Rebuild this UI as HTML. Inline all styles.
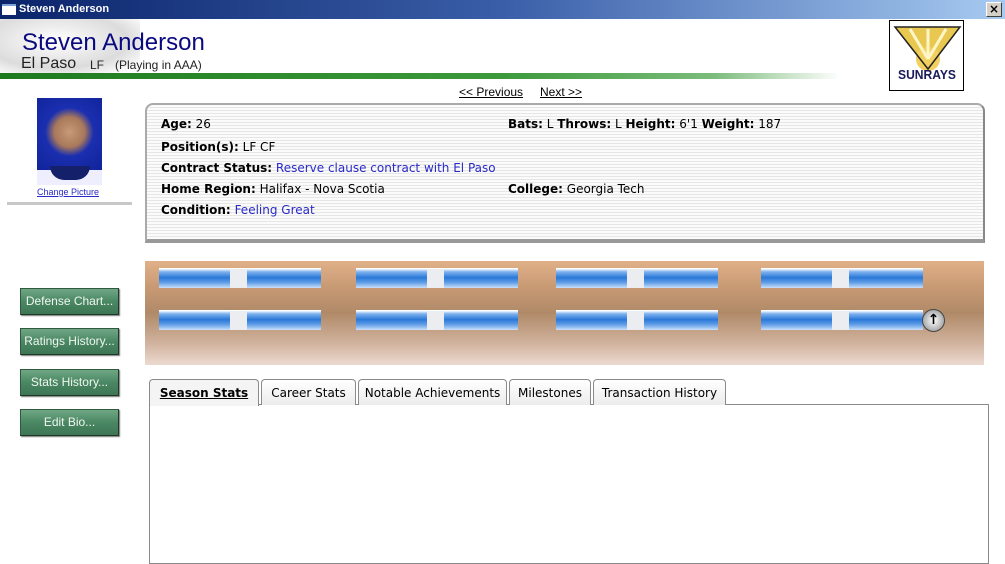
<!DOCTYPE html>
<html><head><style>
*{margin:0;padding:0;box-sizing:border-box}
body{width:1005px;height:556px;overflow:hidden;background:#fff;font-family:"DejaVu Sans",sans-serif;position:relative}
.abs{position:absolute}
.t{position:absolute;font-size:12px;color:#000;white-space:nowrap}
.b{font-weight:bold}
.lnk{color:#2a2ac8}
.btn{position:absolute;left:20px;width:99px;height:27px;background:linear-gradient(#6fa784,#4a8763 50%,#3e7655);border:1px solid #2f5a40;border-right-color:#1d3a28;border-bottom-color:#1d3a28;color:#f0f6f0;font-family:"Liberation Sans",sans-serif;font-size:12px;text-align:center;line-height:25px;box-shadow:1px 1px 1px #777}
.bar{position:absolute;width:162px;height:20px;background:linear-gradient(#f4f8ff 0,#7fb2ee 15%,#2a78d8 45%,#5e9ce6 70%,#c9e0fa 100%);border-top:1px solid #fff}
.bar i{position:absolute;left:71px;top:0;width:17px;height:19px;background:#ecedf0}
.tab{position:absolute;top:379px;height:26px;border:1px solid #8a8a8a;border-bottom:none;border-radius:4px 4px 0 0;background:linear-gradient(#fff,#ececec);font-size:12px;text-align:center;line-height:26px}
</style></head><body>
<div class="abs" style="left:0;top:0;width:1005px;height:19px;background:linear-gradient(90deg,#0a246a,#3a5ea8 50%,#a6caf0)"></div>
<div class="abs" style="left:2px;top:4px;width:14px;height:11px;background:#fff;border-top:2px solid #7aa0d8"></div>
<div class="t b" style="left:19px;top:3px;font-size:11px;color:#fff;font-family:'Liberation Sans',sans-serif">Steven Anderson</div>
<div class="abs" style="left:986px;top:2px;width:16px;height:15px;background:#d4d0c8;border:1px solid #fff;border-right-color:#404040;border-bottom-color:#404040;font-size:12px;line-height:12px;text-align:center;font-weight:bold">×</div>
<div class="abs" style="left:0;top:19px;width:140px;height:54px;background:radial-gradient(ellipse at 40% 40%,#fff,#dcdcdc 60%,#fff 90%)"></div>
<div class="t" style="left:22px;top:29px;font-size:24px;color:#0a0a80;font-family:'Liberation Sans',sans-serif">Steven Anderson</div>
<div class="t" style="left:21px;top:55px;font-size:16px;color:#222;font-family:'Liberation Sans',sans-serif">El Paso</div>
<div class="t" style="left:90px;top:58px;font-size:12px;color:#222;font-family:'Liberation Sans',sans-serif">LF</div>
<div class="t" style="left:115px;top:58px;font-size:12px;color:#222;font-family:'Liberation Sans',sans-serif">(Playing in AAA)</div>
<div class="abs" style="left:0;top:73px;width:840px;height:6px;background:linear-gradient(90deg,#1e7a1e,#3c9a3c 60%,#7cbc7c 85%,#fff)"></div>
<div class="abs" style="left:889px;top:20px;width:75px;height:71px;border:1px solid #000;background:#fff;overflow:hidden">
<svg width="75" height="71"><polygon points="5,6 70,6 38,48" fill="#e8c850"/><circle cx="38" cy="38" r="12" fill="#f2d060"/><g stroke="#fff6c8" stroke-width="3"><line x1="38" y1="38" x2="20" y2="8"/><line x1="38" y1="38" x2="38" y2="8"/><line x1="38" y1="38" x2="56" y2="8"/></g><polygon points="5,6 70,6 38,48" fill="none" stroke="#222" stroke-width="1.5"/><text x="37" y="58" text-anchor="middle" font-family="Liberation Sans Narrow,Liberation Sans" font-weight="bold" font-size="13" fill="#1a1a5a" textLength="58" lengthAdjust="spacingAndGlyphs">SUNRAYS</text></svg></div>
<div class="t" style="left:459px;top:85px;font-size:12px;text-decoration:underline;font-family:'Liberation Sans',sans-serif">&lt;&lt; Previous</div>
<div class="t" style="left:540px;top:85px;font-size:12px;text-decoration:underline;font-family:'Liberation Sans',sans-serif">Next &gt;&gt;</div>
<div class="abs" style="left:37px;top:98px;width:65px;height:85px;background:radial-gradient(circle at 50% 40%,#c89a78 0,#a8785a 25%,#1a2fb0 40%,#0d1e90)"></div>
<div class="abs" style="left:37px;top:170px;width:65px;height:15px;background:#eef;"></div>
<div class="abs" style="left:50px;top:166px;width:40px;height:14px;background:#14206a;border-radius:0 0 20px 20px"></div>
<div class="t lnk" style="left:37px;top:187px;font-size:9px;text-decoration:underline;font-family:'Liberation Sans',sans-serif">Change Picture</div>
<div class="abs" style="left:7px;top:202px;width:125px;height:3px;background:#c8c8c8"></div>
<div class="abs" style="left:145px;top:103px;width:840px;height:140px;border:2px solid #aaa;border-right-color:#888;border-bottom:4px solid #999;border-radius:8px 8px 0 0;background:repeating-linear-gradient(#fbfbfb 0,#fbfbfb 2px,#e6e6e6 2px,#e6e6e6 3px)"></div>
<div class="t" style="left:161px;top:117px"><b>Age:</b> 26</div>
<div class="t" style="left:508px;top:117px"><b>Bats:</b> L <b>Throws:</b> L <b>Height:</b> 6'1 <b>Weight:</b> 187</div>
<div class="t" style="left:161px;top:140px"><b>Position(s):</b> LF CF</div>
<div class="t" style="left:161px;top:161px"><b>Contract Status:</b> <span class="lnk">Reserve clause contract with El Paso</span></div>
<div class="t" style="left:161px;top:182px"><b>Home Region:</b> Halifax - Nova Scotia</div>
<div class="t" style="left:508px;top:182px"><b>College:</b> Georgia Tech</div>
<div class="t" style="left:161px;top:203px"><b>Condition:</b> <span class="lnk">Feeling Great</span></div>
<div class="btn" style="top:288px">Defense Chart...</div>
<div class="btn" style="top:328px">Ratings History...</div>
<div class="btn" style="top:369px">Stats History...</div>
<div class="btn" style="top:409px">Edit Bio...</div>
<div class="abs" style="left:145px;top:261px;width:839px;height:104px;background:linear-gradient(#e0b088 0,#c89a74 25%,#b08a68 50%,#d2b4a0 80%,#ecdad0)"></div>
<div class="bar" style="left:159px;top:268px"><i></i></div>
<div class="bar" style="left:356px;top:268px"><i></i></div>
<div class="bar" style="left:556px;top:268px"><i></i></div>
<div class="bar" style="left:761px;top:268px"><i></i></div>
<div class="bar" style="left:159px;top:310px"><i></i></div>
<div class="bar" style="left:356px;top:310px"><i></i></div>
<div class="bar" style="left:556px;top:310px"><i></i></div>
<div class="bar" style="left:761px;top:310px"><i></i></div>
<div class="abs" style="left:922px;top:309px;width:23px;height:23px;border-radius:50%;background:radial-gradient(#fff,#888);border:1px solid #444;text-align:center;font-size:14px;line-height:20px;font-weight:bold">↑</div>
<div class="abs" style="left:149px;top:404px;width:840px;height:160px;border:1px solid #8a8a8a;background:#fff"></div>
<div class="tab b" style="left:149px;width:110px;text-decoration:underline;background:#f4f4f4;height:27px">Season Stats</div>
<div class="tab" style="left:261px;width:95px">Career Stats</div>
<div class="tab" style="left:358px;width:149px">Notable Achievements</div>
<div class="tab" style="left:509px;width:82px">Milestones</div>
<div class="tab" style="left:593px;width:133px">Transaction History</div>
</body></html>
